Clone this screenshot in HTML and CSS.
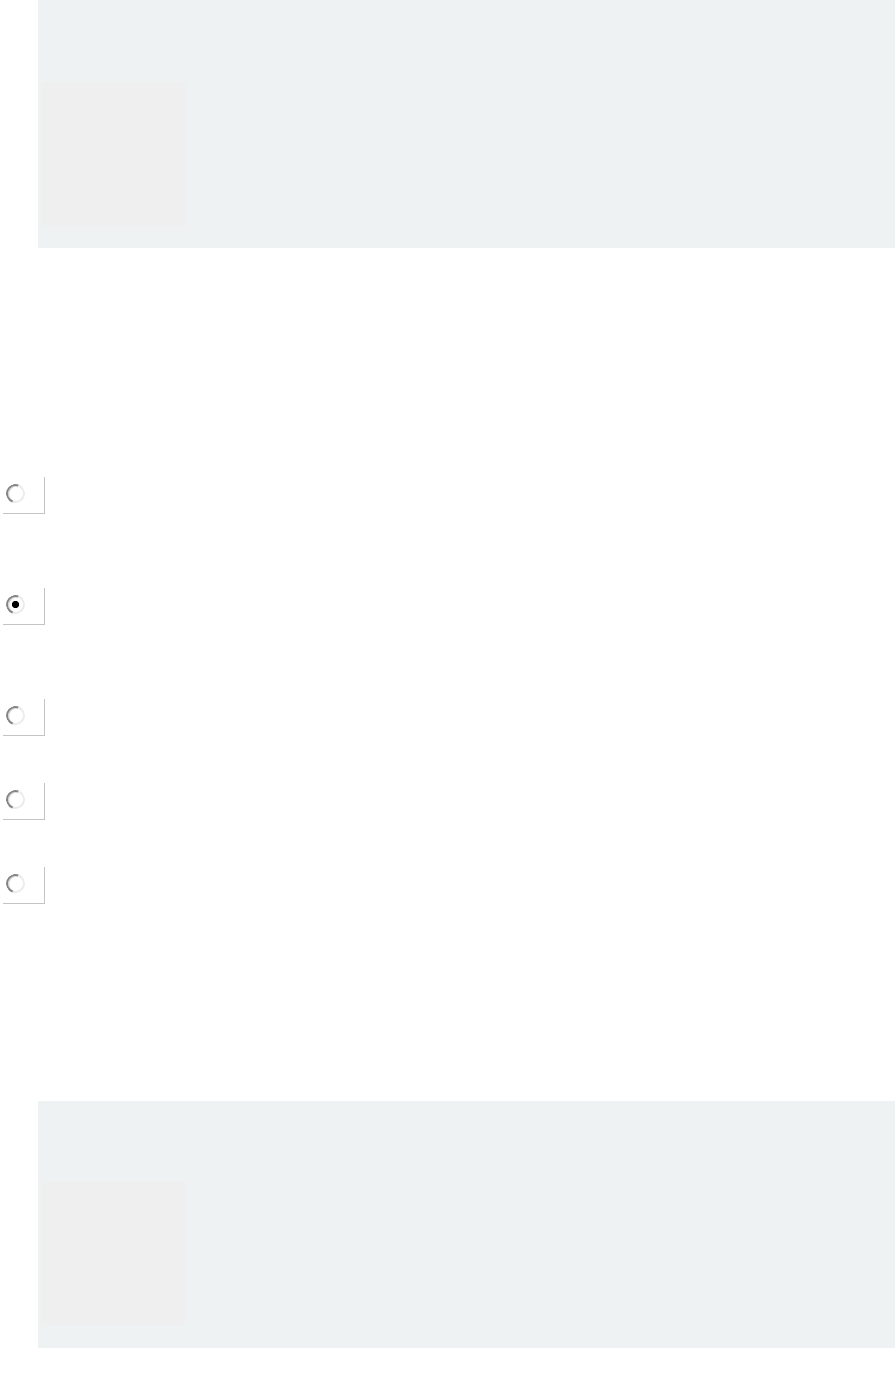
FILE: index.html
```html
<!DOCTYPE html>
<html lang="en">
<head>
<meta charset="utf-8">
<title>Options</title>
<link rel="stylesheet" href="styles.css">
</head>
<body>
<section class="panel panel-top">
  <div class="thumb"></div>
</section>

<form class="options">
  <label class="opt gap-lg"><input class="radio" type="radio" name="choice" value="1"></label>
  <label class="opt gap-lg"><input class="radio" type="radio" name="choice" value="2" checked></label>
  <label class="opt gap-sm"><input class="radio" type="radio" name="choice" value="3"></label>
  <label class="opt gap-sm"><input class="radio" type="radio" name="choice" value="4"></label>
  <label class="opt"><input class="radio" type="radio" name="choice" value="5"></label>
</form>

<section class="panel panel-bottom">
  <div class="thumb"></div>
</section>
</body>
</html>
```

FILE: styles.css
```css
html, body {
  margin: 0;
  padding: 0;
  background: #ffffff;
  font-family: "Liberation Sans", Arial, sans-serif;
}

.panel {
  box-sizing: border-box;
  margin-left: 38px;
  background: #eef2f3;
  padding-left: 3px;
}

.panel-top {
  height: 248px;
  padding-top: 82px;
}

.panel-bottom {
  margin-top: 197px;
  height: 247px;
  padding-top: 80px;
}

.thumb {
  width: 144px;
  height: 143px;
  background: #efefef;
}

.panel-bottom .thumb {
  height: 144px;
}

.options {
  margin: 229px 0 0 0;
  display: flex;
  flex-direction: column;
}

.opt {
  box-sizing: border-box;
  display: flex;
  align-items: flex-start;
  width: 42px;
  height: 37px;
  margin-left: 3px;
  padding: 7px 0 0 3px;
  border-right: 1px solid #c4c4c4;
  border-bottom: 1px solid #c4c4c4;
}

.gap-lg { margin-bottom: 74px; }
.gap-sm { margin-bottom: 47px; }

.radio {
  -webkit-appearance: none;
  appearance: none;
  box-sizing: border-box;
  margin: 0;
  width: 19px;
  height: 19px;
  border-radius: 50%;
  border: 2px solid;
  border-color: #858585 #ebebeb #ebebeb #858585;
  background: #ffffff;
  box-shadow: inset 1px 1px 0 #d6d6d6;
  transform: rotate(-25deg);
}

.radio:checked {
  background: radial-gradient(circle, #000 0, #000 3.2px, #ffffff 4px);
}
```
